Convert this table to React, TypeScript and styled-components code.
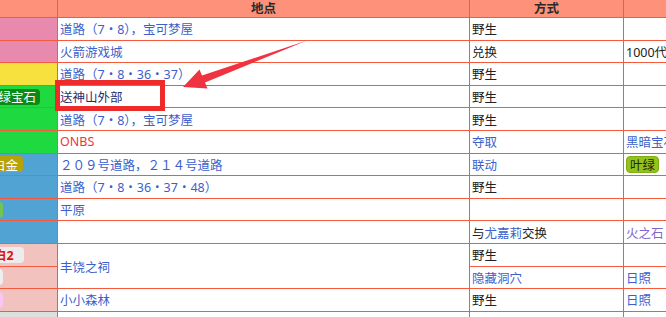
import React from "react";
import styled, { createGlobalStyle } from "styled-components";

const GlobalStyle = createGlobalStyle`
  html, body { margin: 0; padding: 0; background: #ffffff; overflow: hidden; }
  body { font-family: "Noto Sans", "Noto Sans CJK SC", sans-serif; }
`;

const LINE = "#f55a3e";

const Page = styled.div`
  position: relative;
  width: 666px;
  height: 317px;
  overflow: hidden;
  background: #fff;
`;

const Table = styled.div`
  display: grid;
  grid-template-columns: 58px 412px 154px 80px;
  grid-template-rows: 18px;
  grid-auto-rows: 22.6px;
  width: 704px;
  font-size: 12.5px;
`;

const Cell = styled.div<{ $span?: number }>`
  box-sizing: border-box;
  border-right: 1px solid ${LINE};
  border-bottom: 1px solid ${LINE};
  display: flex;
  align-items: center;
  min-width: 0;
  overflow: hidden;
  white-space: nowrap;
  ${(p) => (p.$span ? `grid-row: span ${p.$span};` : "")}
`;

const HeadCell = styled(Cell)`
  background: #fe917a;
  justify-content: center;
  font-weight: 700;
  color: #2a2a2a;
  font-size: 12.5px;
  padding-bottom: 3px;
`;

const VersionCell = styled(Cell)<{ $bg: string; $inset: number }>`
  background: ${(p) => p.$bg};
  justify-content: flex-end;
  padding-right: ${(p) => p.$inset}px;
`;

const Badge = styled.span<{ $bg: string; $fg: string; $bold?: boolean }>`
  flex-shrink: 0;
  display: inline-flex;
  align-items: center;
  height: 16px;
  min-width: 26px;
  padding: 0 4px;
  border-radius: 4px;
  background: ${(p) => p.$bg};
  color: ${(p) => p.$fg};
  font-weight: ${(p) => (p.$bold ? 700 : 400)};
  font-size: 12.5px;
`;

type Tone = "link" | "plain" | "red" | "dark" | "violet";

const toneColor: Record<Tone, string> = {
  link: "#3c5fcc",
  plain: "#222222",
  red: "#e8383d",
  dark: "#1f2d6e",
  violet: "#8068d0",
};

const TextCell = styled(Cell)<{ $tone?: Tone }>`
  padding-left: 2px;
  color: ${(p) => toneColor[p.$tone || "plain"]};
`;

const Link = styled.span`
  color: ${toneColor.link};
`;

const LeafBadge = styled.span`
  display: inline-flex;
  align-items: center;
  height: 15px;
  padding: 0 3px;
  border-radius: 4px;
  background: #93c21f;
  border: 1px solid #7fae12;
  color: #1e2a05;
  font-size: 12.5px;
`;

const Highlight = styled.div`
  position: absolute;
  left: 55px;
  top: 80px;
  width: 110px;
  height: 31px;
  box-sizing: border-box;
  border: 5px solid #ee2b2b;
  pointer-events: none;
`;

const Overlay = styled.svg`
  position: absolute;
  left: 0;
  top: 0;
  pointer-events: none;
`;

const PINK = "#e78aae";
const YELLOW = "#f7e13e";
const GREEN = "#1ed93f";
const BLUE = "#50a3d2";
const ROSE = "#f2c2bf";
const GRAY = "#dde0dc";

export default function App() {
  return (
    <Page>
      <GlobalStyle />
      <Table>
        <HeadCell />
        <HeadCell>地点</HeadCell>
        <HeadCell>方式</HeadCell>
        <HeadCell />

        {/* 1 */}
        <VersionCell $bg={PINK} $inset={0} />
        <TextCell $tone="link">道路（7・8），宝可梦屋</TextCell>
        <TextCell>野生</TextCell>
        <TextCell />

        {/* 2 */}
        <VersionCell $bg={PINK} $inset={0} />
        <TextCell $tone="link">火箭游戏城</TextCell>
        <TextCell>兑换</TextCell>
        <TextCell>1000代币</TextCell>

        {/* 3 */}
        <VersionCell $bg={YELLOW} $inset={0} />
        <TextCell $tone="link">道路（7・8・36・37）</TextCell>
        <TextCell>野生</TextCell>
        <TextCell />

        {/* 4 */}
        <VersionCell $bg={GREEN} $inset={17}>
          <Badge $bg="#0c8a18" $fg="#ffffff">绿宝石</Badge>
        </VersionCell>
        <TextCell $tone="dark">送神山外部</TextCell>
        <TextCell>野生</TextCell>
        <TextCell />

        {/* 5 */}
        <VersionCell $bg={GREEN} $inset={0} />
        <TextCell $tone="link">道路（7・8），宝可梦屋</TextCell>
        <TextCell>野生</TextCell>
        <TextCell />

        {/* 6 */}
        <VersionCell $bg={GREEN} $inset={0} />
        <TextCell $tone="red">ONBS</TextCell>
        <TextCell $tone="link">夺取</TextCell>
        <TextCell $tone="link">黑暗宝石</TextCell>

        {/* 7 */}
        <VersionCell $bg={BLUE} $inset={34}>
          <Badge $bg="#b7a207" $fg="#ffffff">白金</Badge>
        </VersionCell>
        <TextCell $tone="link">２０９号道路，２１４号道路</TextCell>
        <TextCell $tone="link">联动</TextCell>
        <TextCell>
          <LeafBadge>叶绿</LeafBadge>
        </TextCell>

        {/* 8 */}
        <VersionCell $bg={BLUE} $inset={0} />
        <TextCell $tone="link">道路（7・8・36・37・48）</TextCell>
        <TextCell>野生</TextCell>
        <TextCell />

        {/* 9 */}
        <VersionCell $bg={BLUE} $inset={54}>
          <Badge $bg="#72c552" $fg="#ffffff" />
        </VersionCell>
        <TextCell $tone="link">平原</TextCell>
        <TextCell />
        <TextCell />

        {/* 10 */}
        <VersionCell $bg={BLUE} $inset={0} />
        <TextCell />
        <TextCell>
          与<Link>尤嘉莉</Link>交换
        </TextCell>
        <TextCell $tone="violet">火之石</TextCell>

        {/* 11 */}
        <VersionCell $bg={ROSE} $inset={33}>
          <Badge $bg="#ececec" $fg="#e01010" $bold>
            白2
          </Badge>
        </VersionCell>
        <TextCell $tone="link" $span={2}>
          丰饶之祠
        </TextCell>
        <TextCell>野生</TextCell>
        <TextCell />

        {/* 12 */}
        <VersionCell $bg={ROSE} $inset={54}>
          <Badge $bg="#eeeeee" $fg="#222" />
        </VersionCell>
        <TextCell $tone="link">隐藏洞穴</TextCell>
        <TextCell $tone="link">日照</TextCell>

        {/* 13 */}
        <VersionCell $bg={ROSE} $inset={54}>
          <Badge $bg="#f8c6f2" $fg="#222" />
        </VersionCell>
        <TextCell $tone="link">小小森林</TextCell>
        <TextCell>野生</TextCell>
        <TextCell $tone="link">日照</TextCell>

        {/* 14 */}
        <VersionCell $bg={GRAY} $inset={0} />
        <TextCell />
        <TextCell />
        <TextCell />
      </Table>

      <Highlight />
      <Overlay width="666" height="317" viewBox="0 0 666 317">
        <polygon
          points="307,40.5 202,75.5 199.5,69.5 183,87 207.5,88.5 205,82.5"
          fill="#ef3340"
        />
      </Overlay>
    </Page>
  );
}
